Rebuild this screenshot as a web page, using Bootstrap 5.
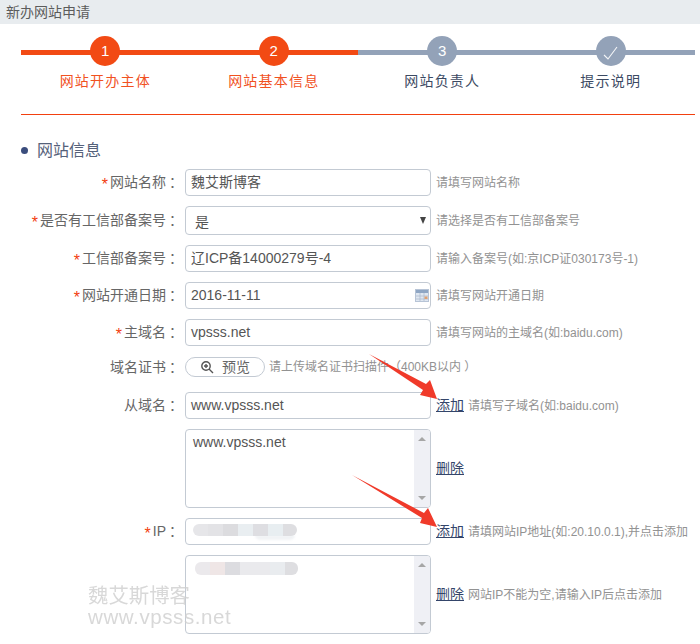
<!DOCTYPE html>
<html lang="zh-CN">
<head>
<meta charset="utf-8">
<title>新办网站申请</title>
<link href="https://cdn.jsdelivr.net/npm/bootstrap@5.3.0/dist/css/bootstrap.min.css" rel="stylesheet">
<style>
html,body{height:644px;overflow:hidden;background:#fff}
body{position:relative;font-family:"Liberation Sans","Noto Sans CJK SC",sans-serif;font-size:14px;color:#666}
.top-bar{height:24px;background:#e8ecef;padding-left:6px;line-height:24px;font-size:14px;color:#5c5c5c}
.wiz{position:relative;margin:0 5px 0 21px;height:90px}
.wiz-rule{height:1px;margin:0 5px 0 21px;background-color:#f2400f}
.wiz-track{position:absolute;left:0;right:0;top:26px;height:5px;background:linear-gradient(to right,#f24a14 0,#f24a14 337px,#93a2b8 337px)}
.wiz-steps{position:relative;padding-top:12px}
.wiz-step{width:168.5px;text-align:center;flex:none}
.wiz-dot{width:30px;height:30px;border-radius:50%;margin:0 auto;line-height:30px;color:#fff;font-size:15px;text-align:center;background:#93a2b8}
.wiz-step.on .wiz-dot{background:#f24a14}
.wiz-name{margin-top:4px;font-size:14px;line-height:22px;letter-spacing:1.2px;color:#3c4a63}
.wiz-step.on .wiz-name{color:#f1521f}
.sec-title{margin:25px 0 0 21px;height:21px;line-height:21px;font-size:16px;color:#55617a}
.sec-dot{width:7px;height:7px;border-radius:50%;background:#3b4d7d;margin-right:9px}
.flabel{width:183px;flex:none;text-align:right;font-size:14px;color:#666}
.colonx{margin-left:3px}
.req{color:#f2400f;font-size:16px;margin-right:2px;line-height:1;vertical-align:-3px}
.fbox.form-control,.fbox.form-select{width:246px;flex:none;margin-left:2px;border:1px solid #c3cad3;border-radius:4px;padding:0 6px 0 5px;font-size:14px;color:#555;box-shadow:none;background-color:#fff;line-height:25px}
.fh27{height:27px}
.fbox.form-select{height:29px;padding:3px 0 0 9px;background-image:none;position:relative;margin-left:0}
.sel-wrap{position:relative;flex:none;margin-left:2px;width:246px}
.sel-wrap .fbox{margin-left:0}
.sel-tri{position:absolute;right:5px;top:11px;width:0;height:0;border-left:3.5px solid transparent;border-right:3.5px solid transparent;border-top:7px solid #444}
.date-ico{position:absolute;right:2px;top:7px}
.hintx{margin-left:5px;font-size:12px;color:#929292;white-space:nowrap}
.linkx{margin-left:5px;color:#34456a;text-decoration:underline;font-size:14px;white-space:nowrap}
.linkx + .hintx{margin-left:4px}
.pv-btn{width:80px;height:20px;flex:none;margin-left:2px;border:1px solid #c3cad3;border-radius:10px;background:#fff;font-size:14px;color:#666;line-height:18px}
.areabox{width:246px;height:79px;flex:none;margin-left:185px;border:1px solid #c3cad3;border-radius:4px;overflow:hidden;background:#fff}
.areatxt{flex:1;padding:2px 7px;font-size:14px;line-height:20px;color:#555}
.sbar{width:16px;flex:none;background:#eff0f5;padding:6px 0}
.blur-a{position:absolute;left:8px;top:6px;height:12px;filter:blur(.6px);border-radius:6px;overflow:hidden}
.blur-b{left:9px;height:13px}
.blur-a i{display:block;width:15px}
.blur-tail{position:absolute;left:70px;top:17px;width:40px;height:5px;background:#f1f3f5;border-radius:0 0 6px 6px;filter:blur(.8px)}
.wm{position:absolute;left:88px;top:586px;color:#cfcfcf;opacity:.8;pointer-events:none;line-height:1}
.wm-a{font-size:20.4px;height:21px}
.wm-b{font-size:20.5px;letter-spacing:.6px;margin-top:0}
.arrows{position:absolute;left:0;top:0;pointer-events:none}
</style>
</head>
<body>
<div class="top-bar">新办网站申请</div>
<div class="wiz">
  <div class="wiz-track"></div>
  <div class="wiz-steps d-flex">
    <div class="wiz-step on"><div class="wiz-dot">1</div><div class="wiz-name">网站开办主体</div></div>
    <div class="wiz-step on"><div class="wiz-dot">2</div><div class="wiz-name">网站基本信息</div></div>
    <div class="wiz-step"><div class="wiz-dot">3</div><div class="wiz-name">网站负责人</div></div>
    <div class="wiz-step"><div class="wiz-dot"><svg width="18" height="18" viewBox="0 0 18 18" fill="none" stroke="#fff" stroke-width="1.1" opacity=".9"><path d="M2 12 L6 16 L15 4"/></svg></div><div class="wiz-name">提示说明</div></div>
  </div>
</div>
<div class="wiz-rule"></div>
<div class="sec-title d-flex align-items-center"><span class="sec-dot"></span><span>网站信息</span></div>

<div class="d-flex align-items-center fh27" style="margin-top:8px">
  <div class="flabel"><span class="req">*</span>网站名称<span class="colonx">：</span></div>
  <div class="fbox form-control fh27">魏艾斯博客</div>
  <span class="hintx">请填写网站名称</span>
</div>
<div class="d-flex align-items-center" style="margin-top:10px">
  <div class="flabel"><span class="req">*</span>是否有工信部备案号<span class="colonx">：</span></div>
  <div class="sel-wrap"><div class="fbox form-select">是</div><span class="sel-tri"></span></div>
  <span class="hintx">请选择是否有工信部备案号</span>
</div>
<div class="d-flex align-items-center fh27" style="margin-top:10px">
  <div class="flabel"><span class="req">*</span>工信部备案号<span class="colonx">：</span></div>
  <div class="fbox form-control fh27">辽ICP备14000279号-4</div>
  <span class="hintx">请输入备案号(如:京ICP证030173号-1)</span>
</div>
<div class="d-flex align-items-center fh27" style="margin-top:10px">
  <div class="flabel"><span class="req">*</span>网站开通日期<span class="colonx">：</span></div>
  <div class="sel-wrap"><div class="fbox form-control fh27">2016-11-11</div>
    <svg class="date-ico" width="14" height="13" viewBox="0 0 14 13"><rect x=".5" y=".5" width="13" height="12" fill="#dfe7f1" stroke="#b7c4d6"/><rect x="1" y="1" width="12" height="3" fill="#8fa6c4"/><path d="M1 7h12M1 10h12M5 4v8M9 4v8" stroke="#aebccf" stroke-width=".8"/><rect x="9.5" y="7.5" width="3" height="2.5" fill="#e0a070"/></svg>
  </div>
  <span class="hintx">请填写网站开通日期</span>
</div>
<div class="d-flex align-items-center fh27" style="margin-top:10px">
  <div class="flabel"><span class="req">*</span>主域名<span class="colonx">：</span></div>
  <div class="fbox form-control fh27">vpsss.net</div>
  <span class="hintx">请填写网站的主域名(如:baidu.com)</span>
</div>
<div class="d-flex align-items-center" style="margin-top:11px;height:20px">
  <div class="flabel">域名证书<span class="colonx">：</span></div>
  <button type="button" class="pv-btn d-flex align-items-center justify-content-center gap-2 p-0"><svg width="14" height="14" viewBox="0 0 14 14" fill="none" stroke="#555" stroke-width="1.4"><circle cx="6" cy="6" r="4.2"/><path d="M9 9l4 4M4 6h4M6 4v4" /></svg><span>预览</span></button>
  <span class="hintx" style="margin-left:4px">请上传域名证书扫描件（400KB以内 ）</span>
</div>
<div class="d-flex align-items-center fh27" style="margin-top:15px">
  <div class="flabel">从域名<span class="colonx">：</span></div>
  <div class="fbox form-control fh27">www.vpsss.net</div>
  <a class="linkx" href="#">添加</a>
  <span class="hintx">请填写子域名(如:baidu.com)</span>
</div>
<div class="d-flex align-items-center" style="margin-top:10px">
  <div class="areabox d-flex"><div class="areatxt">www.vpsss.net</div>
    <div class="sbar d-flex flex-column justify-content-between align-items-center"><svg width="8" height="6"><path d="M4 1L8 5H0z" fill="#a6a6a6"/></svg><svg width="8" height="6"><path d="M0 1H8L4 5z" fill="#a6a6a6"/></svg></div></div>
  <a class="linkx" href="#">删除</a>
</div>
<div class="d-flex align-items-center fh27" style="margin-top:10px">
  <div class="flabel"><span class="req">*</span>IP<span class="colonx">：</span></div>
  <div class="sel-wrap"><div class="fbox form-control fh27"></div>
    <div class="blur-tail"></div>
    <div class="blur-a d-flex"><i style="background:#e6e6e9"></i><i style="background:#e3e3e6"></i><i style="background:#dcdcdf"></i><i style="background:#e9eef1"></i><i style="background:#dedee2"></i><i style="background:#e8eef1"></i><i style="background:#dedee1;width:14px"></i></div></div>
  <a class="linkx" href="#">添加</a>
  <span class="hintx">请填网站IP地址(如:20.10.0.1),并点击添加</span>
</div>
<div class="d-flex align-items-center" style="margin-top:10px">
  <div class="areabox d-flex position-relative"><div class="areatxt"></div>
    <div class="blur-a blur-b d-flex"><i style="background:#ebe9ec"></i><i style="background:#efe6e6"></i><i style="background:#dcdce0"></i><i style="background:#eaeaed"></i><i style="background:#eaeaed"></i><i style="background:#e9ecef"></i><i style="background:#dedee1;width:13px"></i></div>
    <div class="sbar d-flex flex-column justify-content-between align-items-center"><svg width="8" height="6"><path d="M4 1L8 5H0z" fill="#a6a6a6"/></svg><svg width="8" height="6"><path d="M0 1H8L4 5z" fill="#a6a6a6"/></svg></div></div>
  <a class="linkx" href="#">删除</a>
  <span class="hintx">网站IP不能为空,请输入IP后点击添加</span>
</div>

<div class="wm"><div class="wm-a">魏艾斯博客</div><div class="wm-b">www.vpsss.net</div></div>
<svg class="arrows" width="700" height="644" viewBox="0 0 700 644">
  <path d="M369 354 L426 384 L430 380 L437 399 L420 395 L423 390 Z" fill="#f03a2a"/>
  <path d="M352 475 L424 513 L428 508 L437 527 L420 523 L422 518 Z" fill="#f03a2a"/>
</svg>
</body>
</html>
